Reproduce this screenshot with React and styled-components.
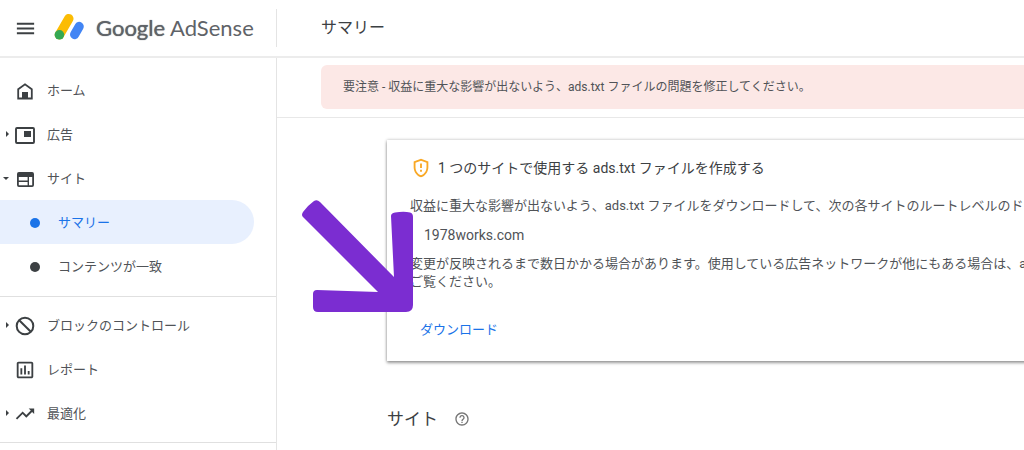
import React from 'react';
import styled, { createGlobalStyle } from 'styled-components';
import {
  MdHelpOutline,
  MdMenu,
  MdOutlineAssessment,
  MdOutlineGppMaybe,
  MdTrendingUp,
} from 'react-icons/md';

const GlobalStyle = createGlobalStyle`
  * {
    box-sizing: border-box;
  }

  body {
    margin: 0;
    background: #fff;
    color: #505357;
    font-family: Roboto, 'Noto Sans CJK JP', sans-serif;
    font-size: 13px;
    overflow: hidden;
  }
`;

const Page = styled.div`
  display: flex;
  flex-direction: column;
  min-height: 100vh;
`;

const TopBar = styled.header`
  display: flex;
  align-items: center;
  height: 58px;
  border-bottom: 2px solid #ececec;
`;

const Brand = styled.div`
  display: flex;
  align-items: center;
  flex: 0 0 277px;
  height: 38px;
  padding-left: 14px;
  border-right: 1px solid #e4e4e4;
`;

const MenuButton = styled.button`
  display: flex;
  padding: 0;
  border: 0;
  background: none;
  color: #3c4043;
  cursor: pointer;
`;

const BrandLink = styled.a`
  display: flex;
  align-items: center;
  gap: 10px;
  margin-left: 17px;
  color: #5f6368;
  font-family: Lato, sans-serif;
  font-size: 22px;
  line-height: 32px;
  white-space: nowrap;
  text-decoration: none;
`;

const BrandStrong = styled.span`
  text-shadow: 0 0 1px currentColor;
`;

const PageTitle = styled.h1`
  margin: 0 0 0 44px;
  font-size: 16px;
  font-weight: 400;
  line-height: 24px;
  color: #3c4043;
`;

const Body = styled.div`
  display: flex;
  flex: 1;
`;

const Sidebar = styled.nav`
  flex: 0 0 277px;
  padding-top: 10px;
  border-right: 1px solid #e4e4e4;
`;

const NavGroup = styled.ul`
  margin: 0;
  padding: 0 0 8px;
  list-style: none;
  border-bottom: 1px solid #e0e0e0;

  & + & {
    padding: 6px 0 7px;
  }
`;

const NavLink = styled.a`
  display: grid;
  grid-template-columns: 10px 22px 1fr;
  column-gap: 4px;
  align-items: center;
  height: 44px;
  color: #505357;
  text-decoration: none;
`;

const NavIcon = styled.span`
  display: flex;
  justify-content: center;
  padding-top: 2px;
  color: #3c4043;
`;

const NavLabel = styled.span`
  padding: 0 0 2px 7px;
`;

const SubLink = styled.a`
  display: flex;
  align-items: center;
  gap: 11px;
  height: 44px;
  margin-right: 22px;
  padding-left: 30px;
  border-radius: 0 22px 22px 0;
  background: ${({ $active }) => ($active ? '#e8f0fe' : 'transparent')};
  color: ${({ $active }) => ($active ? '#1a73e8' : '#505357')};
  text-decoration: none;
`;

const Dot = styled.span`
  width: 10px;
  height: 10px;
  margin-top: 2px;
  border-radius: 50%;
  background: ${({ $active }) => ($active ? '#1a73e8' : '#3c4043')};
`;

const Caret = styled.span`
  justify-self: end;
  margin-right: 1px;
  border: solid transparent;
  border-width: ${({ $open }) => ($open ? '3px 3px 0' : '3px 0 3px 3px')};
  border-top-color: ${({ $open }) => ($open ? '#3c4043' : 'transparent')};
  border-left-color: ${({ $open }) => ($open ? 'transparent' : '#3c4043')};
`;

const Main = styled.main`
  flex: 1;
  min-width: 0;
  overflow: hidden;
`;

const AlertRow = styled.div`
  padding: 7px 0 8px 44px;
  border-bottom: 1px solid #e8e8e8;
`;

const Alert = styled.div`
  padding: 12px 22px;
  border-radius: 6px 0 0 6px;
  background: #fce8e6;
  font-size: 12px;
  line-height: 20px;
  white-space: nowrap;
`;

const Content = styled.div`
  padding: 22px 0 0 110px;
`;

const Card = styled.section`
  position: relative;
  margin-right: -16px;
  padding: 16px 0 13px 23px;
  background: #fff;
  box-shadow: 0 2px 3px rgba(0, 0, 0, 0.35), 0 0 3px rgba(0, 0, 0, 0.25);
  white-space: nowrap;
`;

const CardTitle = styled.h2`
  display: flex;
  align-items: center;
  gap: 6px;
  margin: 0 0 17px;
  font-size: 14px;
  font-weight: 400;
  line-height: 24px;
  color: #3c4043;

  svg {
    color: #f9a825;
  }
`;

const Text = styled.p`
  margin: 0;
  line-height: 18px;
`;

const SiteList = styled.ul`
  margin: 11px 0;
  padding-left: 14px;
  font-size: 14px;
  line-height: 18px;
`;

const DownloadButton = styled.button`
  display: block;
  margin-top: 21px;
  padding: 8px 10px;
  border: 0;
  background: none;
  color: #1a73e8;
  font: inherit;
  line-height: 20px;
  cursor: pointer;
`;

const Arrow = styled.svg`
  position: absolute;
  left: -87px;
  top: 58px;
  pointer-events: none;
`;

const SectionTitle = styled.h2`
  display: flex;
  align-items: center;
  gap: 16px;
  margin: 46px 0 0;
  font-size: 17px;
  font-weight: 400;
  line-height: 24px;
  color: #3c4043;

  svg {
    color: #757575;
  }
`;

const Logo = () => (
  <svg width="32" height="30" viewBox="0 0 32 30" aria-hidden="true">
    <path d="M5.4 21.8 14.8 5.6" stroke="#fbbc04" strokeWidth="9.4" strokeLinecap="round" />
    <path d="M20.6 21.6 25.2 13.4" stroke="#4285f4" strokeWidth="9.2" strokeLinecap="round" />
    <circle cx="5.4" cy="21.8" r="4.8" fill="#34a853" />
  </svg>
);

const HomeIcon = () => (
  <svg width="16" height="17" viewBox="0 0 16 17" fill="none">
    <path d="M1.2 15.5V6.3L8 1.3l6.8 5v9.2z" stroke="currentColor" strokeWidth="1.8" />
    <path d="M5 9h6v7H5z" fill="currentColor" />
  </svg>
);

const AdsIcon = () => (
  <svg width="20" height="17" viewBox="0 0 20 17" fill="none">
    <rect x="1" y="1" width="18" height="15" rx="1" stroke="currentColor" strokeWidth="1.9" />
    <path d="M9 4h7v6H9z" fill="currentColor" />
  </svg>
);

const SitesIcon = () => (
  <svg width="17" height="15" viewBox="0 0 17 15" fill="none">
    <rect x=".9" y=".9" width="15.2" height="13.2" rx="1" stroke="currentColor" strokeWidth="1.8" />
    <path d="M1 1h15v4H1z" fill="currentColor" />
    <path d="M1 9.3h10M11.3 5v9" stroke="currentColor" strokeWidth="1.4" />
  </svg>
);

const BlockIcon = () => (
  <svg width="20" height="20" viewBox="0 0 20 20" fill="none">
    <circle cx="10" cy="10" r="8.3" stroke="currentColor" strokeWidth="2" />
    <path d="m4.2 4.2 11.6 11.6" stroke="currentColor" strokeWidth="2" />
  </svg>
);

const primaryItems = [
  { label: 'ホーム', icon: <HomeIcon /> },
  { label: '広告', icon: <AdsIcon />, expandable: true },
  {
    label: 'サイト',
    icon: <SitesIcon />,
    expandable: true,
    open: true,
    children: [{ label: 'サマリー', active: true }, { label: 'コンテンツが一致' }],
  },
];

const secondaryItems = [
  { label: 'ブロックのコントロール', icon: <BlockIcon />, expandable: true },
  { label: 'レポート', icon: <MdOutlineAssessment size={22} /> },
  { label: '最適化', icon: <MdTrendingUp size={22} />, expandable: true },
];

const NavItem = ({ item }) => (
  <li>
    <NavLink href="#">
      {item.expandable ? <Caret $open={item.open} /> : <span />}
      <NavIcon>{item.icon}</NavIcon>
      <NavLabel>{item.label}</NavLabel>
    </NavLink>
    {item.children?.map(child => (
      <SubLink key={child.label} href="#" $active={child.active}>
        <Dot $active={child.active} />
        <NavLabel>{child.label}</NavLabel>
      </SubLink>
    ))}
  </li>
);

export default function App() {
  return (
    <Page>
      <GlobalStyle />
      <TopBar>
        <Brand>
          <MenuButton aria-label="メニュー">
            <MdMenu size={23} />
          </MenuButton>
          <BrandLink href="#">
            <Logo />
            <span>
              <BrandStrong>Google</BrandStrong> AdSense
            </span>
          </BrandLink>
        </Brand>
        <PageTitle>サマリー</PageTitle>
      </TopBar>
      <Body>
        <Sidebar>
          <NavGroup>
            {primaryItems.map(item => <NavItem key={item.label} item={item} />)}
          </NavGroup>
          <NavGroup>
            {secondaryItems.map(item => <NavItem key={item.label} item={item} />)}
          </NavGroup>
        </Sidebar>
        <Main>
          <AlertRow>
            <Alert role="alert">
              要注意 - 収益に重大な影響が出ないよう、ads.txt ファイルの問題を修正してください。
            </Alert>
          </AlertRow>
          <Content>
            <Card>
              <CardTitle>
                <MdOutlineGppMaybe size={22} />
                1 つのサイトで使用する ads.txt ファイルを作成する
              </CardTitle>
              <Text>
                収益に重大な影響が出ないよう、ads.txt ファイルをダウンロードして、次の各サイトのルートレベルのド
              </Text>
              <SiteList>
                <li>1978works.com</li>
              </SiteList>
              <Text>
                変更が反映されるまで数日かかる場合があります。使用している広告ネットワークが他にもある場合は、a
                <br />
                ご覧ください。
              </Text>
              <DownloadButton>ダウンロード</DownloadButton>
              <Arrow width="116" height="116" viewBox="0 0 116 116" aria-hidden="true">
                <path
                  d="M3 14Q7 8 14 3Q17 1 20 4L94 79 91 18Q91 15 95 14.5Q104 13 110 14.5Q113 15 113 19V107Q113 114 106 114H18Q13 114 13 109V96Q13 92 17 92L78 94 3 19Q1 17 3 14Z"
                  fill="#7b2dd1"
                />
              </Arrow>
            </Card>
            <SectionTitle>
              サイト
              <MdHelpOutline size={16} />
            </SectionTitle>
          </Content>
        </Main>
      </Body>
    </Page>
  );
}
